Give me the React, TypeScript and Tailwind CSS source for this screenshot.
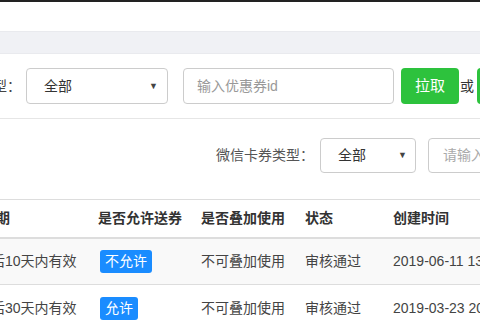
import React from "react";

const font = { fontFamily: '"Liberation Sans", "Noto Sans CJK SC", sans-serif' };

function Caret() {
  return <span className="text-[9px] leading-none text-[#444]">▼</span>;
}

export default function App() {
  return (
    <div className="w-[480px] h-[320px] overflow-hidden bg-white text-[14px] text-[#444]" style={font}>
      <div className="h-[2px] bg-[#222]" />
      <div className="h-[29px] bg-white" />
      <div className="h-[23px] bg-[#f0f1f5] border-y border-[#e9eaee]" />
      {/* row 1 */}
      <div className="mt-[14px] flex items-center h-[36px] whitespace-nowrap">
        <div className="w-[21px] overflow-hidden flex justify-end text-[#444] shrink-0">
          <span className="shrink-0">优惠券类型：</span>
        </div>
        <div className="ml-[5px] w-[142px] h-[36px] border border-[#ccc] rounded-[4px] flex items-center justify-between pl-[17px] pr-[9px] shrink-0">
          <span className="text-[#333]">全部</span>
          <Caret />
        </div>
        <div className="ml-[15px] w-[211px] h-[36px] border border-[#ccc] rounded-[4px] flex items-center pl-[13px] text-[#999] shrink-0">
          输入优惠券id
        </div>
        <div className="ml-[7px] w-[58px] h-[36px] rounded-[4px] bg-[#2dc23d] text-white text-[15px] flex items-center justify-center shrink-0">
          拉取
        </div>
        <span className="ml-[1px] text-[#333] shrink-0">或</span>
        <div className="ml-[3px] w-[40px] h-[36px] rounded-[4px] bg-[#2dc23d] shrink-0" />
      </div>
      <div className="mt-[14px] h-px bg-[#e6e6e6]" />
      {/* row 2 */}
      <div className="mt-[19px] flex items-center h-[35px] whitespace-nowrap">
        <span className="ml-[216px] text-[#555] shrink-0">微信卡券类型：</span>
        <div className="ml-[6px] w-[96px] h-[35px] border border-[#ccc] rounded-[4px] flex items-center justify-between pl-[17px] pr-[8px] shrink-0">
          <span className="text-[#333]">全部</span>
          <Caret />
        </div>
        <div className="ml-[12px] w-[120px] h-[35px] border border-[#ccc] rounded-[4px] flex items-center pl-[14px] text-[#aaa] shrink-0">
          请输入卡券id
        </div>
      </div>
      {/* table */}
      <div className="mt-[26px] border-t border-[#ddd] whitespace-nowrap">
        <div className="h-[39px] flex items-center font-bold text-[#333] border-b-2 border-[#ddd]">
          <div className="w-[98px] overflow-hidden shrink-0">
            <span className="inline-block ml-[-32px]">有效期</span>
          </div>
          <div className="w-[103px] shrink-0">是否允许送券</div>
          <div className="w-[104px] shrink-0">是否叠加使用</div>
          <div className="w-[88px] shrink-0">状态</div>
          <div className="shrink-0">创建时间</div>
        </div>
        <div className="h-[46px] flex items-center bg-[#f9f9f9] border-b border-[#ddd]">
          <div className="w-[98px] overflow-hidden shrink-0">
            <span className="inline-block ml-[-37px]">领取后10天内有效</span>
          </div>
          <div className="w-[103px] shrink-0">
            <span className="inline-flex items-center h-[23px] px-[5px] ml-[2px] rounded-[3px] bg-[#1a8cff] text-white">不允许</span>
          </div>
          <div className="w-[104px] shrink-0">不可叠加使用</div>
          <div className="w-[88px] shrink-0">审核通过</div>
          <div className="shrink-0">2019-06-11 13:25:10</div>
        </div>
        <div className="h-[46px] flex items-center bg-white">
          <div className="w-[98px] overflow-hidden shrink-0">
            <span className="inline-block ml-[-37px]">领取后30天内有效</span>
          </div>
          <div className="w-[103px] shrink-0">
            <span className="inline-flex items-center h-[23px] px-[5px] ml-[2px] rounded-[3px] bg-[#1a8cff] text-white">允许</span>
          </div>
          <div className="w-[104px] shrink-0">不可叠加使用</div>
          <div className="w-[88px] shrink-0">审核通过</div>
          <div className="shrink-0">2019-03-23 20:11:45</div>
        </div>
      </div>
    </div>
  );
}
